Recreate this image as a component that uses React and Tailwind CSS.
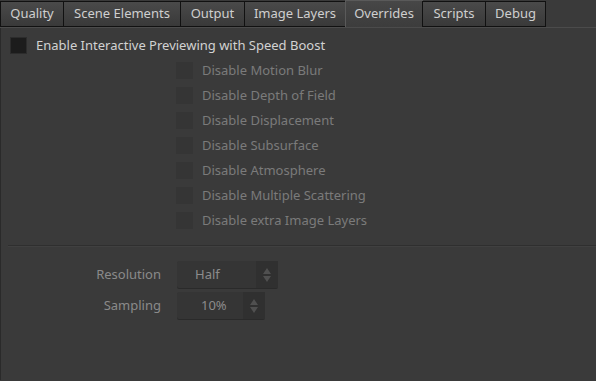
export default function App() {
  const tabs = [
    { t: 'Quality', w: 'w-[64px]' },
    { t: 'Scene Elements', w: 'w-[118px]' },
    { t: 'Output', w: 'w-[65px]' },
    { t: 'Image Layers', w: 'w-[102px]' },
    { t: 'Overrides', w: 'w-[78px]', on: true },
    { t: 'Scripts', w: 'w-[64px]' },
    { t: 'Debug', w: 'w-[61px]' },
  ];
  const opts = [
    'Disable Motion Blur',
    'Disable Depth of Field',
    'Disable Displacement',
    'Disable Subsurface',
    'Disable Atmosphere',
    'Disable Multiple Scattering',
    'Disable extra Image Layers',
  ];
  const f = { fontFamily: "'Noto Sans', 'Open Sans', sans-serif" };

  return (
    <div className="w-[596px] h-[381px] bg-[#3a3a3a] text-[13px] overflow-hidden" style={f}>
      {/* Tab strip */}
      <div className="flex items-end h-[28px] pt-[1px] border-b border-[#4b4b4b]">
        {tabs.map((tab) =>
          tab.on ? (
            <div key={tab.t} className={`${tab.w} h-[27px] -ml-px flex items-center justify-center bg-gradient-to-b from-[#474747] to-[#3c3c3c] border-x border-t border-[#5a5a5a] text-[#cfcfcf]`}>
              {tab.t}
            </div>
          ) : (
            <div key={tab.t} className={`${tab.w} h-[26px] -ml-px first:ml-0 flex items-center justify-center bg-gradient-to-b from-[#4a4a4a] to-[#393939] border border-[#111] text-[#cfcfcf]`}>
              {tab.t}
            </div>
          )
        )}
      </div>

      {/* Panel */}
      <div className="border-l border-[#2a2a2a] h-[352px]">
        <div className="flex items-center gap-[9px] pl-[9px] pt-[5px] h-[30px]">
          <div className="w-[17px] h-[17px] bg-[#1c1c1c] border border-[#2c2c2c]" />
          <span className="text-[#d2d2d2]">Enable Interactive Previewing with Speed Boost</span>
        </div>

        <div className="flex flex-col pl-[175px]">
          {opts.map((o) => (
            <div key={o} className="flex items-center gap-[9px] h-[25px]">
              <div className="w-[17px] h-[17px] bg-[#353535]" />
              <span className="text-[#7b7b7b]">{o}</span>
            </div>
          ))}
        </div>

        <div className="ml-[7px] mt-[12px] border-t border-[#2f2f2f]" />
        <div className="ml-[7px] border-t border-[#404040]" />

        <div className="grid grid-cols-[160px_auto] gap-x-[16px] gap-y-[4px] mt-[14px] items-center">
          <span className="text-right text-[#8a8a8a]">Resolution</span>
          <div className="flex w-[101px] h-[27px] bg-[#353535] shadow-[0_1px_0_#2a2a2a] rounded-[2px]">
            <span className="flex-1 pl-[18px] flex items-center text-[#8c8c8c]">Half</span>
            <Spin />
          </div>
          <span className="text-right text-[#8a8a8a]">Sampling</span>
          <div className="flex w-[88px] h-[27px] bg-[#353535] shadow-[0_1px_0_#2a2a2a] rounded-[2px]">
            <span className="flex-1 pl-[24px] flex items-center text-[#8c8c8c]">10%</span>
            <Spin />
          </div>
        </div>
      </div>
    </div>
  );
}

function Spin() {
  return (
    <div className="w-[22px] h-full bg-[#303030] flex items-center justify-center">
      <svg width="10" height="16" viewBox="0 0 10 16">
        <path d="M5 1 L9 7 H1 Z" fill="#505050" />
        <path d="M5 15 L9 9 H1 Z" fill="#505050" />
      </svg>
    </div>
  );
}
